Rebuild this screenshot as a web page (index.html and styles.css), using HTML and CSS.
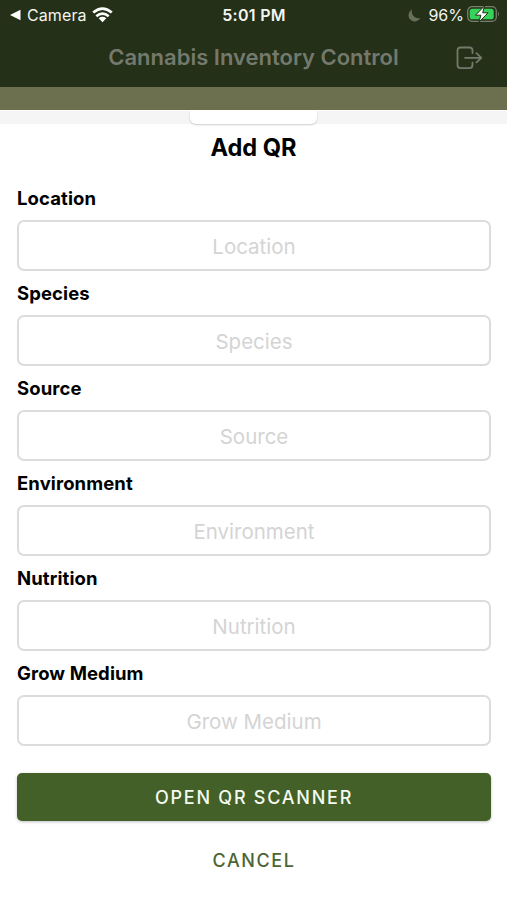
FILE: index.html
```
<!DOCTYPE html>
<html lang="en">
<head>
<meta charset="utf-8">
<title>Cannabis Inventory Control</title>
<link rel="stylesheet" href="styles.css">
</head>
<body>
<header class="top">
  <div class="status">
    <div class="status-left">
      <svg class="back" width="11" height="12" viewBox="0 0 11 12"><path d="M0 6 10.5 .8v10.4z" fill="#fff"/></svg>
      <span class="camera">Camera</span>
      <svg class="wifi" width="21" height="16" viewBox="0 0 21 16"><g fill="none" stroke="#fff" stroke-width="2.7"><path d="M1.2 5.6Q10.5-2.4 19.8 5.6"/><path d="M4.3 9.2Q10.5 3.9 16.7 9.2"/></g><path d="M6.7 11.2Q10.5 8.3 14.3 11.2L10.5 15.2z" fill="#fff"/></svg>
    </div>
    <span class="time">5:01 PM</span>
    <div class="status-right">
      <svg class="moon" width="13" height="13" viewBox="0 0 13 13"><path d="M4.2.6A6.2 6.2 0 1 0 12.3 9 6.5 6.5 0 0 1 4.2.6z" fill="#66705a"/></svg>
      <span class="percent">96%</span>
      <svg class="battery" width="33" height="18" viewBox="0 0 33 18"><rect x=".7" y="1.7" width="28.6" height="14.6" rx="4.4" fill="none" stroke="#76806d" stroke-width="1.3"/><rect x="2.7" y="3.7" width="24" height="10.6" rx="2.6" fill="#35d35a"/><path d="M31 6.6q2 2.4 0 4.8z" fill="#76806d"/><path d="M17.5.9 8.5 10.2h5.4l-2 7 9.2-9.4h-5.4z" fill="#fff" stroke="#243018" stroke-width="1"/></svg>
    </div>
  </div>
  <div class="nav">
    <h1 class="app-title">Cannabis Inventory Control</h1>
    <svg class="logout" width="27" height="24" viewBox="0 0 27 24"><g fill="none" stroke="#74796d" stroke-width="1.8" stroke-linecap="round" stroke-linejoin="round"><path d="M16.5 7V4.5Q16.5 1.5 13.5 1.5H4.5Q1.5 1.5 1.5 4.5v14.6q0 3 3 3h9q3 0 3-3v-2.5M9 11.8h16.2M20.5 7.2l4.8 4.6-4.8 4.6"/></g></svg>
  </div>
</header>
<div class="band"></div>
<main class="sheet">
  <div class="strip"><div class="handle"></div></div>
  <h2 class="title">Add QR</h2>
  <form class="form">
    <label class="field">Location<input type="text" placeholder="Location"></label>
    <label class="field">Species<input type="text" placeholder="Species"></label>
    <label class="field">Source<input type="text" placeholder="Source"></label>
    <label class="field">Environment<input type="text" placeholder="Environment"></label>
    <label class="field">Nutrition<input type="text" placeholder="Nutrition"></label>
    <label class="field">Grow Medium<input type="text" placeholder="Grow Medium"></label>
    <button class="primary" type="button">OPEN QR SCANNER</button>
    <button class="cancel" type="button">CANCEL</button>
  </form>
</main>
</body>
</html>
```
FILE: styles.css
```
* { box-sizing: border-box; }
body { margin: 0; height: 900px; overflow: hidden; background: #fff; font-family: Inter, "Liberation Sans", sans-serif; }
.top { height: 87px; background: #243018; }
.status { height: 30px; display: grid; grid-template-columns: 1fr auto 1fr; align-items: center; padding: 0 7px 0 10px; color: #f4f6f1; }
.status-left, .status-right { display: flex; align-items: center; }
.status-right { justify-content: flex-end; }
.camera { font-size: 16px; letter-spacing: .1px; margin: 0 6px 0 6px; }
.wifi { margin: -1px 0 0 -1px; }
.time { margin-left: -2px; font-size: 16px; font-weight: 600; letter-spacing: .3px; }
.percent { font-size: 16px; margin: 0 3px 0 6px; }
.moon { margin-right: 1px; }
.battery { margin-top: -2px; }
.nav { height: 57px; display: grid; grid-template-columns: 108px 1fr 108px; align-items: center; }
.app-title { grid-column: 2; margin: 0; font-size: 22px; font-weight: 600; line-height: 55px; height: 57px; color: #74796d; text-align: center; white-space: nowrap; }
.logout { margin: -2px 0 0 57px; }
.band { height: 23px; background: #6d704e; }
.sheet { height: 790px; background: #fff; }
.strip { height: 14px; background: #f5f5f5; border-top: 1px solid #fff; }
.handle { width: 127px; height: 13px; margin: 0 auto; background: #fff; border-radius: 0 0 6px 6px; box-shadow: 0 1px 2px rgba(0, 0, 0, .2); clip-path: inset(0 -4px -4px); }
.title { margin: 0; height: 64px; font-size: 23.6px; line-height: 48px; font-weight: 700; text-align: center; color: #000; }
.form { padding: 0 16px 0 17px; display: flex; flex-direction: column; }
.field { height: 95px; display: flex; flex-direction: column; font-size: 18.5px; line-height: 21px; font-weight: 700; letter-spacing: .1px; color: #000; }
.field input { width: 100%; height: 51px; margin: 11px 0 0; padding: 2px 0 0; border: 2px solid #dcdcdc; border-radius: 7px; background: #fff; font: 400 20.5px Inter, "Liberation Sans", sans-serif; text-align: center; outline: none; }
.field input::placeholder { color: #d4d4d4; opacity: 1; }
.primary, .cancel { border: 0; padding: 0; font: 500 18px Inter, "Liberation Sans", sans-serif; letter-spacing: 1.75px; }
.primary { height: 48px; margin-top: 15px; border-radius: 5px; background: #436028; color: #f5faef; box-shadow: 0 1px 3px rgba(0, 0, 0, .25); }
.cancel { height: 48px; margin-top: 15px; background: transparent; color: #4c6534; letter-spacing: 1.6px; }
```
